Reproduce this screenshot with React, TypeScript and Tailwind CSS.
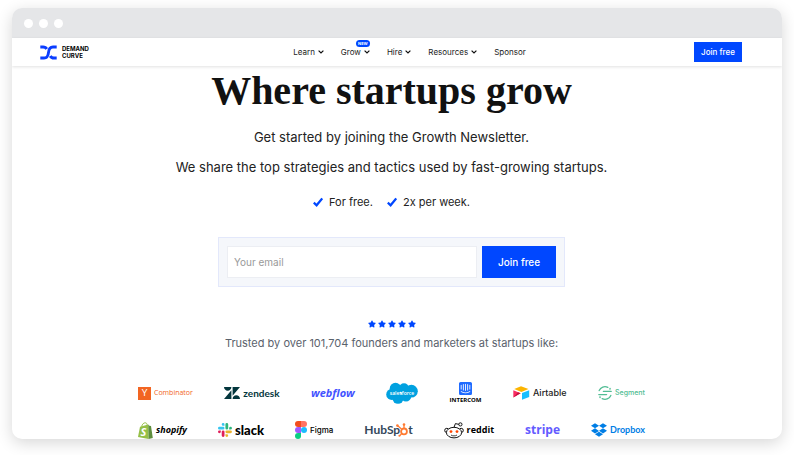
import type { ReactNode } from "react";
import { FaStar } from "react-icons/fa";
import { FaDropbox } from "react-icons/fa6";
import { SiIntercom, SiZendesk } from "react-icons/si";

const menu = [
  { name: "Learn", dropdown: true },
  { name: "Grow", dropdown: true, badge: "NEW" },
  { name: "Hire", dropdown: true },
  { name: "Resources", dropdown: true },
  { name: "Sponsor", dropdown: false },
];

function ChevronIcon() {
  return (
    <svg viewBox="0 0 6 4" className="w-1.5 h-1" fill="none">
      <path d="M0.6 0.6 L3 3 L5.4 0.6" stroke="#111" strokeWidth="1.2" />
    </svg>
  );
}

function CheckIcon() {
  return (
    <svg viewBox="0 0 10 10" className="w-2.5 h-2.5" fill="none">
      <path d="M0.8 5.6 L3.6 8.3 L9.2 1.4" stroke="#0047ff" strokeWidth="2.2" />
    </svg>
  );
}

function BrandMark() {
  return (
    <svg
      viewBox="0 0 17 15"
      className="w-[17px] h-[15px]"
      fill="none"
      stroke="#0a3dff"
      strokeWidth="2.9"
    >
      <path d="M0.3 13 H4 C7.4 13 8.2 11 8.5 7.5 C8.8 4 9.6 2 13 2 H16.7" />
      <path d="M0.3 2 H3 C5 2 6 2.6 6.7 4" />
      <path d="M16.7 13 H14 C12 13 11 12.4 10.3 11" />
    </svg>
  );
}

function ShopifyIcon() {
  return (
    <svg viewBox="0 0 15 17" className="w-[15px] h-[17px]">
      <path
        d="M3.6 4.6 C4.2 2 5.8 0.8 7.2 0.8 C8.6 0.8 9.2 2 9.3 3.6"
        fill="none"
        stroke="#95bf47"
        strokeWidth="1"
      />
      <path d="M2 4.8 L10.2 2.4 L10.6 17 L0 15 Z" fill="#95bf47" />
      <path d="M10.2 2.4 L11.4 3.8 L13 4 L14.8 16 L10.6 17 Z" fill="#5e8e3e" />
      <text
        x="2.6"
        y="14"
        fontSize="11"
        fontWeight="700"
        fontStyle="italic"
        fontFamily="Open Sans, sans-serif"
        fill="#fff"
      >
        S
      </text>
    </svg>
  );
}

function SlackIcon() {
  return (
    <svg viewBox="0 0 54 54" className="w-3.5 h-3.5">
      <path
        fill="#36C5F0"
        d="M19.7.1a5.4 5.4 0 1 0 0 10.8h5.4V5.5A5.4 5.4 0 0 0 19.7.1m0 14.4H5.4a5.4 5.4 0 0 0 0 10.8h14.3a5.4 5.4 0 0 0 0-10.8"
      />
      <path
        fill="#2EB67D"
        d="M53.8 19.9a5.4 5.4 0 1 0-10.8 0v5.4h5.4a5.4 5.4 0 0 0 5.4-5.4m-14.4 0V5.5a5.4 5.4 0 1 0-10.8 0v14.4a5.4 5.4 0 1 0 10.8 0"
      />
      <path
        fill="#ECB22E"
        d="M34 54a5.4 5.4 0 1 0 0-10.8h-5.4v5.4A5.4 5.4 0 0 0 34 54m0-14.4h14.4a5.4 5.4 0 0 0 0-10.8H34a5.4 5.4 0 0 0 0 10.8"
      />
      <path
        fill="#E01E5A"
        d="M0 34.2a5.4 5.4 0 1 0 10.8 0v-5.4H5.4A5.4 5.4 0 0 0 0 34.2m14.3 0v14.4a5.4 5.4 0 1 0 10.8 0V34.2a5.4 5.4 0 1 0-10.8 0"
      />
    </svg>
  );
}

function FigmaIcon() {
  return (
    <svg viewBox="0 0 12 18" className="w-3 h-[18px]">
      <path d="M6 0 H3 a3 3 0 0 0 0 6 H6 Z" fill="#f24e1e" />
      <path d="M6 0 H9 a3 3 0 0 1 0 6 H6 Z" fill="#ff7262" />
      <path d="M6 6 H3 a3 3 0 0 0 0 6 H6 Z" fill="#a259ff" />
      <circle cx="9" cy="9" r="3" fill="#1abcfe" />
      <path d="M6 12 H3 a3 3 0 1 0 3 3 Z" fill="#0acf83" />
    </svg>
  );
}

function SprocketIcon() {
  return (
    <svg
      viewBox="0 0 12 14"
      className="w-3 h-3.5"
      fill="none"
      stroke="#ff7a30"
      strokeWidth="1.3"
    >
      <circle cx="8" cy="8.4" r="2.9" strokeWidth="1.8" />
      <path d="M8 5.4 V2.2" />
      <path d="M5.8 6.2 L1.4 2.6" />
      <path d="M5.8 10.6 L3.6 12.8" />
      <g fill="#ff7a30" stroke="none">
        <circle cx="8" cy="1.6" r="1.3" />
        <circle cx="1.4" cy="2.6" r="1.3" />
        <circle cx="3.4" cy="12.8" r="1" />
      </g>
    </svg>
  );
}

function RedditIcon() {
  return (
    <svg viewBox="0 0 20 17" className="w-5 h-[17px]" fill="none">
      <g stroke="#111" strokeWidth="1">
        <path d="M10 5.4 L11.4 1.6 L15 2.4" />
        <circle cx="16.4" cy="2.4" r="1.6" fill="#fff" />
        <circle cx="2.8" cy="8.4" r="2.1" fill="#fff" />
        <circle cx="17.2" cy="8.4" r="2.1" fill="#fff" />
        <ellipse cx="10" cy="10.6" rx="7.6" ry="5.3" fill="#fff" />
        <path d="M7 13 C8.6 14.2 11.4 14.2 13 13" strokeWidth="0.8" />
      </g>
      <circle cx="7" cy="9.6" r="1.4" fill="#ff4500" />
      <circle cx="13" cy="9.6" r="1.4" fill="#ff4500" />
    </svg>
  );
}

function AirtableIcon() {
  return (
    <svg viewBox="0 0 17 14" className="w-[17px] h-3.5">
      <path d="M8 0.3 L15.5 3 L8.4 5.9 L1.2 3 Z" fill="#fcb400" />
      <path d="M9 7 L16.2 4.2 V11 L9 13.8 Z" fill="#18bfff" />
      <path d="M0.3 4.2 L7.6 7.3 L0.3 11.4 Z" fill="#f82b60" />
      <path d="M0.3 11.4 L5 6.2 L7.6 7.3 Z" fill="#c4133f" />
    </svg>
  );
}

function SegmentIcon() {
  return (
    <svg
      viewBox="0 0 14 14"
      className="w-3.5 h-3.5"
      fill="none"
      stroke="#52bd94"
      strokeWidth="1.3"
      strokeLinecap="round"
    >
      <path d="M1.2 4.6 A6.2 6.2 0 0 1 9.8 1.4" />
      <path d="M12.8 9.4 A6.2 6.2 0 0 1 4.2 12.6" />
      <path d="M5.4 5.4 H13.2" />
      <path d="M0.8 8.6 H8.6" />
      <circle cx="12" cy="2.8" r="0.3" />
      <circle cx="2" cy="11.2" r="0.3" />
    </svg>
  );
}

function SalesforceLogo() {
  return (
    <svg viewBox="0 0 32 22" className="w-8 h-[22px]">
      <g fill="#00a1e0">
        <circle cx="9.5" cy="6.5" r="5.8" />
        <circle cx="18" cy="6.2" r="5" />
        <circle cx="25.4" cy="9.2" r="6.4" />
        <circle cx="5.8" cy="12.4" r="5.6" />
        <circle cx="12" cy="16.2" r="5.6" />
        <circle cx="20" cy="14.4" r="5.2" />
      </g>
      <text
        x="16"
        y="12.6"
        textAnchor="middle"
        fontSize="5"
        fontWeight="600"
        fontFamily="Open Sans, sans-serif"
        fill="#fff"
      >
        salesforce
      </text>
    </svg>
  );
}

function Logo({ children }: { children: ReactNode }) {
  return <li className="flex h-6 items-center gap-[3px]">{children}</li>;
}

function Header() {
  return (
    <header className="relative flex h-7 shrink-0 items-center bg-white pl-7 pr-10 shadow-[0_1px_3px_rgba(0,0,0,0.12)]">
      <a href="#" className="flex items-center gap-[5px]">
        <BrandMark />
        <span className="flex flex-col text-[6px] leading-[7px] font-bold text-black">
          <span>DEMAND</span>
          <span>CURVE</span>
        </span>
      </a>
      <nav className="flex flex-1 justify-center gap-[17px] pl-9">
        {menu.map((item) => (
          <a
            key={item.name}
            href="#"
            className="relative flex items-center gap-[3px] text-[8px] leading-3 text-[#222]"
          >
            {item.name}
            {item.dropdown && <ChevronIcon />}
            {item.badge && (
              <span className="absolute -top-1.5 right-0 flex h-[7px] w-3.5 items-center justify-center rounded-full bg-[#0047ff] text-[4px] font-bold text-white">
                {item.badge}
              </span>
            )}
          </a>
        ))}
      </nav>
      <button
        type="button"
        className="h-5 w-12 bg-[#0047ff] text-[8px] font-medium text-white"
      >
        Join free
      </button>
    </header>
  );
}

function SignupForm() {
  return (
    <form className="mt-[27px] flex w-full max-w-[347px] gap-[5px] border border-[#e3e8fb] bg-[#f5f7fb] p-2">
      <input
        type="email"
        aria-label="Your email"
        placeholder="Your email"
        className="h-8 min-w-0 flex-1 border border-[#eceef3] bg-white px-1.5 text-[10px] placeholder:text-[#999]"
      />
      <button
        type="button"
        className="h-8 w-[74px] bg-[#0047ff] text-[10px] font-medium text-white"
      >
        Join free
      </button>
    </form>
  );
}

function Customers() {
  return (
    <div className="mt-[30px] w-full max-w-[507px] space-y-[13px] whitespace-nowrap leading-4">
      <ul className="flex justify-between">
        <Logo>
          <span className="flex h-[13px] w-[13px] items-center justify-center bg-[#f26522] font-[Lato] text-[9px] text-white">
            Y
          </span>
          <span className="font-['Open_Sans'] text-[7px] text-[#f26522]">
            Combinator
          </span>
        </Logo>
        <Logo>
          <SiZendesk size={16} color="#03363d" />
          <span className="font-[Lato] text-[10px] font-bold text-[#03363d]">
            zendesk
          </span>
        </Logo>
        <Logo>
          <span className="font-['Open_Sans'] text-[11px] font-bold italic text-[#4353ff]">
            webflow
          </span>
        </Logo>
        <Logo>
          <SalesforceLogo />
        </Logo>
        <Logo>
          <span className="flex flex-col items-center gap-0.5">
            <SiIntercom size={13} color="#1f6bff" />
            <span className="font-['Open_Sans'] text-[6px] leading-[7px] font-bold text-black">
              INTERCOM
            </span>
          </span>
        </Logo>
        <Logo>
          <AirtableIcon />
          <span className="text-[9px] font-medium text-[#222]">Airtable</span>
        </Logo>
        <Logo>
          <SegmentIcon />
          <span className="text-[7px] font-medium text-[#52bd94]">Segment</span>
        </Logo>
      </ul>
      <ul className="flex justify-between">
        <Logo>
          <ShopifyIcon />
          <span className="font-['Open_Sans'] text-[9px] font-bold italic text-black">
            shopify
          </span>
        </Logo>
        <Logo>
          <SlackIcon />
          <span className="font-[Lato] text-[13px] font-black text-black">
            slack
          </span>
        </Logo>
        <Logo>
          <FigmaIcon />
          <span className="text-[8px] font-medium text-black">Figma</span>
        </Logo>
        <Logo>
          <span className="flex items-center font-[Lato] text-[12px] font-bold text-[#33475b]">
            HubSp
            <span className="-ml-1">
              <SprocketIcon />
            </span>
            t
          </span>
        </Logo>
        <Logo>
          <RedditIcon />
          <span className="font-['Open_Sans'] text-[9px] font-bold text-black">
            reddit
          </span>
        </Logo>
        <Logo>
          <span className="font-['Open_Sans'] text-[12px] font-bold text-[#635bff]">
            stripe
          </span>
        </Logo>
        <Logo>
          <FaDropbox size={16} color="#007ee5" />
          <span className="font-[Lato] text-[9px] font-bold text-[#007ee5]">
            Dropbox
          </span>
        </Logo>
      </ul>
    </div>
  );
}

export default function App() {
  return (
    <div className="flex h-screen bg-white px-3 pt-2 pb-4 font-[Inter,sans-serif]">
      <div className="flex flex-1 flex-col overflow-hidden rounded-[10px] bg-white shadow-[0_4px_16px_rgba(0,0,0,0.16)]">
        <div className="flex h-[30px] shrink-0 items-center gap-1.5 bg-[#e5e6e8] px-3">
          <span className="h-[9px] w-[9px] rounded-full bg-white" />
          <span className="h-[9px] w-[9px] rounded-full bg-white" />
          <span className="h-[9px] w-[9px] rounded-full bg-white" />
        </div>
        <Header />
        <main className="flex flex-col items-center pt-[5px] pr-[11px]">
          <h1 className="font-['Liberation_Serif',serif] text-[40px] leading-10 font-bold text-[#111]">
            Where startups grow
          </h1>
          <p className="mt-4 text-[13px] leading-5 text-[#222]">
            Get started by joining the Growth Newsletter.
          </p>
          <p className="mt-2.5 text-[13px] leading-5 text-[#222]">
            We share the top strategies and tactics used by fast-growing
            startups.
          </p>
          <ul className="mt-[17px] flex gap-3.5 text-[11px] leading-4 text-[#222]">
            <li className="flex items-center gap-1.5">
              <CheckIcon />
              For free.
            </li>
            <li className="flex items-center gap-1.5">
              <CheckIcon />
              2x per week.
            </li>
          </ul>
          <SignupForm />
          <div className="mt-[33px] flex gap-0.5 text-[#0047ff]">
            {[1, 2, 3, 4, 5].map((star) => (
              <FaStar key={star} size={8} />
            ))}
          </div>
          <p className="mt-[7px] text-[11px] leading-4 text-[#5a626c]">
            Trusted by over 101,704 founders and marketers at startups like:
          </p>
          <Customers />
        </main>
      </div>
    </div>
  );
}
